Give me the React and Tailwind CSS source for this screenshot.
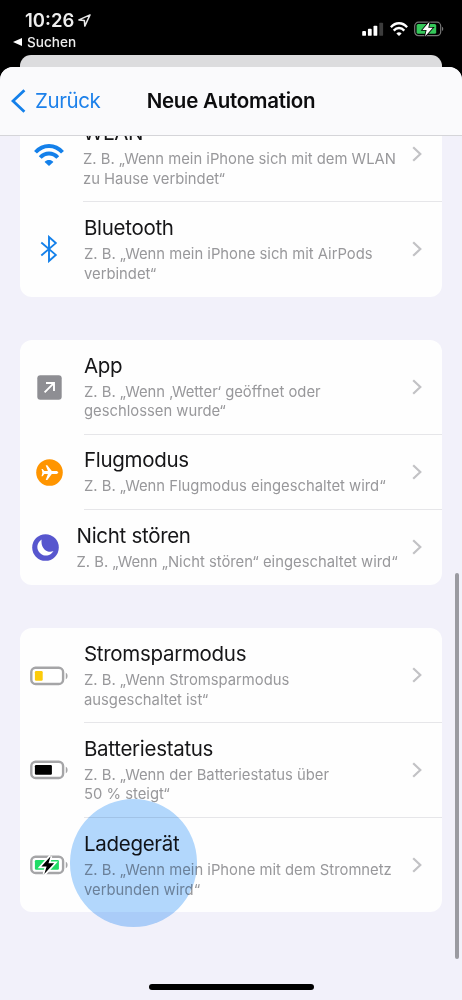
import { clsx } from 'clsx'

function LocationArrow() {
  return (
    <svg width="13" height="13" viewBox="0 0 13 13" fill="none" stroke="#e8e8e8" strokeWidth="1.5" strokeLinejoin="round">
      <path d="M12 .9.9 5.9l5.5.7.4 5.5z" />
    </svg>
  )
}

function SignalBars() {
  return (
    <svg width="22" height="14" viewBox="0 0 22 14" fill="#fff">
      <rect x="0.2" y="9" width="3.8" height="4.8" rx="0.9" />
      <rect x="5.9" y="6.8" width="3.8" height="7" rx="0.9" />
      <rect x="11.5" y="3.7" width="3.8" height="10.1" rx="0.9" />
      <rect x="17.3" y="0.7" width="3.8" height="13.1" rx="0.9" fill="#3c3c3c" />
    </svg>
  )
}

function WifiIcon({ width, height, color }) {
  return (
    <svg width={width} height={height} viewBox="0 0 30 22" preserveAspectRatio="none" fill="none" stroke={color} strokeWidth="3.9">
      <path d="M1.5 8.3C9-.1 21-.1 28.5 8.3" />
      <path d="M6.2 13.5c5-5.3 12.6-5.3 17.6 0" />
      <path d="M10.6 18c2.5-2.6 6.3-2.6 8.8 0L15 22z" fill={color} stroke="none" />
    </svg>
  )
}

function StatusBattery() {
  return (
    <svg width="30" height="16" viewBox="0 0 30 16">
      <rect x="0.7" y="1.2" width="26" height="13.4" rx="3.8" fill="none" stroke="#777" strokeWidth="1.2" />
      <path d="M28 5.8v4.2c1.7-.6 1.7-3.6 0-4.2z" fill="#777" />
      <rect x="2.6" y="3" width="19.6" height="9.8" rx="1.6" fill="#34c759" />
      <path d="M15.6.5 8.4 8.9h4.2l-1.6 6.5 7.8-8.6h-4.5z" fill="#fff" stroke="#000" strokeWidth="1.6" paintOrder="stroke" />
    </svg>
  )
}

function BluetoothIcon() {
  return (
    <svg width="18" height="28" viewBox="0 0 18 28" fill="none" stroke="#1480ea" strokeWidth="1.9" strokeLinejoin="miter">
      <path d="M1.3 7.5 15.8 19.9 9 26V2l6.8 6.1L1.3 20.5" />
    </svg>
  )
}

function AppIcon() {
  return (
    <svg width="25" height="25" viewBox="0 0 25 25">
      <rect x="0.3" y="0.3" width="24.4" height="24.4" rx="3" fill="#8e8e93" />
      <path d="M9 8h8v8M16.6 8.4 7.6 17.4" fill="none" stroke="#fff" strokeWidth="1.9" />
    </svg>
  )
}

function FlightIcon() {
  return (
    <svg width="27" height="27" viewBox="0 0 27 27">
      <circle cx="13.5" cy="13.5" r="13.3" fill="#ff9500" />
      <path
        d="M22.3 13.6c0-.9-1.3-1.5-2.6-1.5h-3.9L11.3 6.3H9.7l2.2 5.8H8.4L6.6 10H5.5l.9 3.6-.9 3.6h1.1l1.8-2.1h3.5l-2.2 5.8h1.6l4.5-5.8h3.9c1.3 0 2.6-.6 2.6-1.5z"
        fill="#fff"
      />
    </svg>
  )
}

function MoonIcon() {
  return (
    <svg width="27" height="27" viewBox="0 0 27 27">
      <circle cx="13.5" cy="13.5" r="13.3" fill="#5756ce" />
      <path d="M9.7 5.5a8.6 8.6 0 1 0 11.8 11.6c-3 1.2-6.6.6-9-1.7-2.5-2.4-3.5-6.5-2.8-9.9z" fill="#fff" />
    </svg>
  )
}

function BatteryIcon({ level, color, charging }) {
  return (
    <svg width="39" height="20" viewBox="0 0 39 20">
      <rect x="1.3" y="1.8" width="31.8" height="16.2" rx="4.3" fill="#fff" stroke="#a5a5a7" strokeWidth="2.4" />
      <path d="M35.8 6.8v6.4c2.4-.8 2.4-5.6 0-6.4z" fill="#a5a5a7" />
      <rect x="4.9" y="5" width={level} height="9.8" rx="1.2" fill={color} />
      {charging && (
        <path
          d="M20.6 1.2 11.4 11.5h5.2l-2.3 7.6 9.8-10.8h-5.6z"
          fill="#000"
          stroke="#fff"
          strokeWidth="3.4"
          paintOrder="stroke"
        />
      )}
    </svg>
  )
}

function Chevron() {
  return (
    <svg className="shrink-0" width="10" height="16" viewBox="0 0 10 16" fill="none" stroke="#c2c2c5" strokeWidth="2.2">
      <path d="M1.2 1.2 8.3 8l-7.1 6.8" />
    </svg>
  )
}

const groups = [
  [
    {
      title: 'WLAN',
      lines: ['Z. B. „Wenn mein iPhone sich mit dem WLAN', 'zu Hause verbindet“'],
      icon: <WifiIcon width={30} height={22} color="#1480ea" />,
      inset: 'w-[57px]',
    },
    {
      title: 'Bluetooth',
      lines: ['Z. B. „Wenn mein iPhone sich mit AirPods', 'verbindet“'],
      icon: <BluetoothIcon />,
    },
  ],
  [
    {
      title: 'App',
      lines: ['Z. B. „Wenn ‚Wetter‘ geöffnet oder', 'geschlossen wurde“'],
      icon: <AppIcon />,
    },
    {
      title: 'Flugmodus',
      lines: ['Z. B. „Wenn Flugmodus eingeschaltet wird“'],
      icon: <FlightIcon />,
    },
    {
      title: 'Nicht stören',
      lines: ['Z. B. „Wenn „Nicht stören“ eingeschaltet wird“'],
      icon: <MoonIcon />,
      inset: 'w-[50.5px]',
    },
  ],
  [
    {
      title: 'Stromsparmodus',
      lines: ['Z. B. „Wenn Stromsparmodus', 'ausgeschaltet ist“'],
      icon: <BatteryIcon level={7.8} color="#fccb0a" />,
    },
    {
      title: 'Batteriestatus',
      lines: ['Z. B. „Wenn der Batteriestatus über', '50 % steigt“'],
      icon: <BatteryIcon level={17} color="#000" />,
    },
    {
      title: 'Ladegerät',
      lines: ['Z. B. „Wenn mein iPhone mit dem Stromnetz', 'verbunden wird“'],
      icon: <BatteryIcon level={24} color="#1fdc65" charging />,
    },
  ],
]

function Row({ title, lines, icon, inset = 'w-[58px]', last }) {
  return (
    <div className={clsx('flex', lines.length > 1 ? 'h-[94.7px]' : 'h-[75.2px]')}>
      <div className={clsx('mr-[6px] flex shrink-0 items-center justify-center', inset)}>{icon}</div>
      <div className={clsx('flex min-w-0 grow items-center justify-between pr-[20px]', !last && 'border-b border-[#e6e6e9]')}>
        <div className="pt-[1px] whitespace-nowrap">
          <h2 className="mb-[4px] text-[20.5px] leading-[26px] tracking-[-0.3px] text-[#161618]">{title}</h2>
          {lines.map((line) => (
            <p key={line} className="text-[14.8px] leading-[19.6px] text-[#98989b]">
              {line}
            </p>
          ))}
        </div>
        <Chevron />
      </div>
    </div>
  )
}

export default function App() {
  return (
    <div className="relative flex h-[1000px] w-[462px] flex-col overflow-hidden bg-black font-['Inter',sans-serif]">
      <header className="flex h-[55px] shrink-0 justify-between text-[#eee]">
        <div className="pt-[9px] pl-[13px]">
          <div className="flex items-center gap-[4px] pl-[12px]">
            <span className="text-[18.5px] leading-[22px] font-semibold">10:26</span>
            <LocationArrow />
          </div>
          <div className="flex items-center gap-[5px] text-[13.6px] leading-[22px] font-medium">
            <svg width="9" height="8" viewBox="0 0 9 8" fill="#fff">
              <path d="M0 4 9 0v8z" />
            </svg>
            <span>Suchen</span>
          </div>
        </div>
        <div className="mt-[20.5px] flex h-[16px] items-center gap-[6px] pr-[18px]">
          <SignalBars />
          <WifiIcon width={18} height={14} color="#fff" />
          <StatusBattery />
        </div>
      </header>

      <div className="mx-5 h-[12px] shrink-0 rounded-t-[11px] bg-[#dcdcde]" />

      <main className="flex min-h-0 grow flex-col overflow-hidden rounded-t-[13px] bg-[#f2f1fa]">
        <nav className="grid h-[69px] shrink-0 grid-cols-[1fr_auto_1fr] items-center border-b border-[#d5d5d9] bg-[#fafafc]">
          <button className="flex items-center gap-[9px] pl-[11px] text-[20.5px] tracking-[-0.4px] text-[#1c80ea]">
            <svg width="15" height="24" viewBox="0 0 15 24" fill="none" stroke="#1480ea" strokeWidth="2.8">
              <path d="M13.4 1.2 2 12l11.4 10.8" />
            </svg>
            Zurück
          </button>
          <h1 className="text-[20.5px] font-semibold tracking-[-0.25px] text-[#0c0c0e]">Neue Automation</h1>
        </nav>
        <div className="min-h-0 grow overflow-hidden">
          <div className="-mt-[28.8px] flex flex-col gap-[43.4px] px-5">
            {groups.map((rows) => (
              <section key={rows[0].title} className="overflow-hidden rounded-[12px] bg-[#fefefe]">
                {rows.map((row, i) => (
                  <Row key={row.title} {...row} last={i === rows.length - 1} />
                ))}
              </section>
            ))}
          </div>
        </div>
      </main>

      {/* touch marker, scroll bar and home indicator float over the list */}
      <div className="absolute top-[799px] left-[70px] h-[128px] w-[127px] rounded-full bg-[#b3d8fd] mix-blend-multiply" />
      <div className="absolute top-[573px] right-[3px] h-[386px] w-[4px] rounded-full bg-[#9b9ba1]" />
      <div className="absolute top-[984px] left-[149px] h-[6px] w-[165px] rounded-full bg-black" />
    </div>
  )
}
